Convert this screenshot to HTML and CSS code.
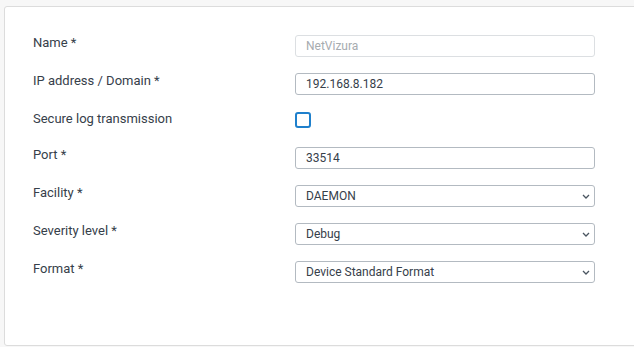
FILE: index.html
```html
<!DOCTYPE html>
<html lang="en">
<head>
    <meta charset="UTF-8">
    <meta name="viewport" content="width=device-width, initial-scale=1.0">
    <title>Syslog target</title>
    <link rel="stylesheet" href="styles.css">
</head>
<body>
    <div class="card">
        <form class="form">
            <label class="label">Name *</label>
            <input class="field" type="text" placeholder="NetVizura" disabled>

            <label class="label">IP address / Domain *</label>
            <input class="field" type="text" value="192.168.8.182">

            <label class="label">Secure log transmission</label>
            <div class="check-row"><input class="check" type="checkbox"></div>

            <label class="label">Port *</label>
            <input class="field" type="text" value="33514">

            <label class="label">Facility *</label>
            <div class="select">
                <span>DAEMON</span>
                <svg class="chevron" width="8" height="5" viewBox="0 0 8 5"><path d="M1 1l3 3 3-3" fill="none" stroke="#4a5560" stroke-width="1.3"/></svg>
            </div>

            <label class="label">Severity level *</label>
            <div class="select">
                <span>Debug</span>
                <svg class="chevron" width="8" height="5" viewBox="0 0 8 5"><path d="M1 1l3 3 3-3" fill="none" stroke="#4a5560" stroke-width="1.3"/></svg>
            </div>

            <label class="label">Format *</label>
            <div class="select">
                <span>Device Standard Format</span>
                <svg class="chevron" width="8" height="5" viewBox="0 0 8 5"><path d="M1 1l3 3 3-3" fill="none" stroke="#4a5560" stroke-width="1.3"/></svg>
            </div>
        </form>
    </div>
</body>
</html>
```

FILE: styles.css
```css
body {
    margin: 0;
    background-color: #f7f7f7;
    font-family: 'Roboto', 'Liberation Sans', sans-serif;
    font-size: 12px;
    color: #36404a;
    overflow: hidden;
}
.card {
    margin: 6px 0 0 4px;
    width: 660px;
    height: 340px;
    background-color: #fff;
    border: 1px solid #dcdcdc;
    border-radius: 3px;
    box-sizing: border-box;
    padding: 28px 0 0 28px;
}
.form {
    display: grid;
    grid-template-columns: 262px 300px;
    row-gap: 16px;
    align-items: start;
}
.label {
    font-size: 13px;
    line-height: 15px;
}
.field, .select {
    box-sizing: border-box;
    width: 300px;
    height: 22px;
    border: 1px solid #b3bac1;
    border-radius: 3px;
    padding: 0 10px;
    font-family: inherit;
    font-size: 12px;
    color: #36404a;
    background: #fff;
    outline: none;
}
.field:disabled {
    border-color: #dcdfe2;
    background: #fff;
}
.field::placeholder {
    color: #a6abb0;
}
.check-row {
    height: 20px;
    padding-top: 1px;
    box-sizing: border-box;
}
.check {
    appearance: none;
    -webkit-appearance: none;
    margin: 0;
    width: 16px;
    height: 16px;
    border: 2px solid #1f80cc;
    border-radius: 3px;
    box-sizing: border-box;
    display: block;
}
.select {
    display: flex;
    align-items: center;
    justify-content: space-between;
    padding-right: 4px;
}
.chevron {
    display: block;
}
```
